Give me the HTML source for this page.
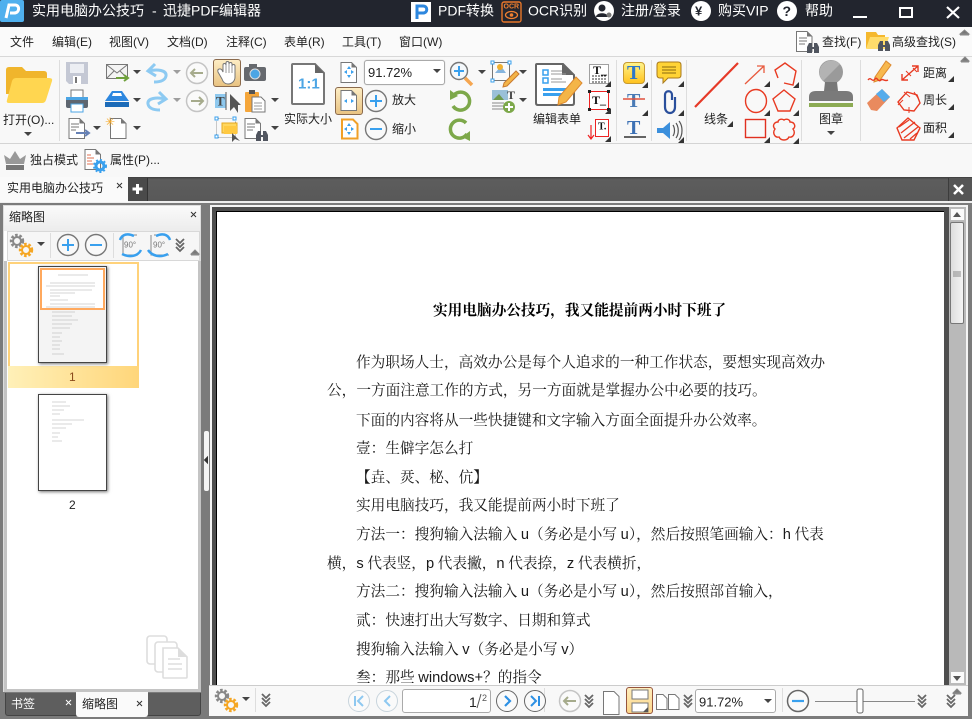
<!DOCTYPE html>
<html lang="zh"><head><meta charset="utf-8"><title>实用电脑办公技巧 - 迅捷PDF编辑器</title>
<style>
html,body{margin:0;padding:0;background:#7b7b7b}
body{position:relative;width:972px;height:719px;overflow:hidden}
div{position:absolute;box-sizing:border-box}
svg{position:absolute;left:0;top:0}
text{font-family:"Liberation Sans","Noto Sans CJK SC",sans-serif;font-size:12px;fill:#222;dominant-baseline:central}
.w{fill:#fff}.t{font-size:14px;fill:#fff}
.d{font-family:"Liberation Serif","Noto Serif CJK SC",serif;font-size:14.66px;fill:#1a1a1a}
.s{font-family:"Liberation Sans",sans-serif}
</style></head><body>
<div style="left:0;top:0;width:972px;height:27px;background:#22252e"></div>
<div style="left:0;top:27px;width:972px;height:30px;background:#fafafa;border-bottom:1px solid #d8d8d8"></div>
<div style="left:0;top:57px;width:972px;height:87px;background:#f8f8f8;border-bottom:1px solid #d4d4d4"></div>
<div style="left:0;top:144px;width:972px;height:33px;background:#f8f8f8"></div>
<div style="left:0;top:177px;width:972px;height:25px;background:linear-gradient(#3d3d3d,#5d5d5d 10%,#585858)"></div>
<div style="left:0;top:201px;width:972px;height:2px;background:#eee"></div>
<div style="left:0;top:177px;width:128px;height:25px;background:#fafafa"></div>
<div style="left:128px;top:178px;width:20px;height:23px;background:#4a4a4a;border-right:1px solid #333"></div>
<div style="left:948px;top:178px;width:24px;height:23px;background:#555;border-left:1px solid #3c3c3c"></div>
<!-- left panel -->
<div style="left:3px;top:205px;width:198px;height:487px;background:#fff;border:1px solid #ddd"></div>
<div style="left:4px;top:206px;width:196px;height:25px;background:linear-gradient(#fafafa,#ececec)"></div>
<div style="left:7px;top:231px;width:193px;height:30px;background:#f6f6f6;border:1px solid #d8d8d8"></div>
<div style="left:4px;top:261px;width:3px;height:431px;background:#c4c4c4"></div>
<div style="left:198px;top:261px;width:3px;height:431px;background:#c4c4c4"></div>
<div style="left:4px;top:689px;width:197px;height:3px;background:#c4c4c4"></div>
<div style="left:8px;top:262px;width:131px;height:126px;background:#fff;border:2px solid #ffd27a;border-bottom:0"></div>
<div style="left:8px;top:366px;width:131px;height:22px;background:linear-gradient(90deg,#fff0b8,#ffd67a)"></div>
<div style="left:38px;top:266px;width:69px;height:97px;background:#f4f4f4;border:1px solid #444;box-shadow:1px 1px 3px #777"></div>
<div style="left:40px;top:268px;width:65px;height:42px;background:#fff;border:2px solid #ffa95e"></div>
<div style="left:38px;top:394px;width:69px;height:97px;background:#fff;border:1px solid #444;box-shadow:1px 1px 3px #777"></div>
<div style="left:5px;top:693px;width:196px;height:23px;background:#5e5e5e;border:1px solid #444;border-top:0;border-radius:0 0 3px 3px"></div>
<div style="left:76px;top:692px;width:72px;height:25px;background:#fafafa;border-radius:0 0 3px 3px"></div>
<!-- splitter -->
<div style="left:204px;top:431px;width:5px;height:60px;background:#f4f4f4;border-radius:2px"></div>
<!-- main view -->
<div style="left:210px;top:205px;width:758px;height:511px;background:#f4f4f4"></div>
<div style="left:212px;top:207px;width:737px;height:478px;background:#4e4e4e"></div>
<div style="left:216px;top:211px;width:728px;height:474px;background:#fff;border:1px solid #000;border-width:1px 0 0 1px"></div>
<div style="left:949px;top:207px;width:17px;height:478px;background:#b9b9b9"></div>
<div style="left:950px;top:208px;width:15px;height:13px;background:#fafafa;border:1px solid #bbb"></div>
<div style="left:950px;top:222px;width:14px;height:102px;background:linear-gradient(90deg,#ddd,#f4f4f4);border:1px solid #777;border-radius:2px"></div>
<div style="left:950px;top:671px;width:15px;height:13px;background:#fafafa;border:1px solid #bbb"></div>
<div style="left:209px;top:685px;width:759px;height:31px;background:#f8f8f8;border-top:1px solid #ccc"></div>
<div style="left:402px;top:689px;width:89px;height:24px;background:#fff;border:1px solid #aaa;border-radius:3px"></div>
<div style="left:695px;top:689px;width:81px;height:24px;background:#fff;border:1px solid #aaa;border-radius:3px"></div>
<div style="left:626px;top:687px;width:27px;height:27px;background:linear-gradient(#ffeebd,#fbd488);border:1px solid #95543c;border-radius:3px"></div>
<div style="left:364px;top:60px;width:81px;height:25px;background:#fff;border:1px solid #aaa;border-radius:3px;box-shadow:0 0 1px #bbb"></div>
<div style="left:213px;top:59px;width:28px;height:28px;background:linear-gradient(#fdedc4,#e9c382);border:1px solid #8b6a4c;border-radius:3px"></div>
<div style="left:335px;top:87px;width:28px;height:28px;background:linear-gradient(#fdedc4,#e9c382);border:1px solid #8b6a4c;border-radius:3px"></div>
<div style="left:623px;top:62px;width:22px;height:22px;background:linear-gradient(#fff38a,#ffc21f);border:1px solid #c79a30;border-radius:4px"></div>

<svg width="972" height="719" viewBox="0 0 972 719" xmlns="http://www.w3.org/2000/svg">
<defs>
<path id="ar" d="M-4 -2H4L0 2Z" fill="#444"/>
<path id="tri" d="M3 -3V3H-3Z" fill="#333"/>
<g id="ch" fill="none" stroke="#666" stroke-width="1.800"><path d="M-4 -6L0 -2L4 -6M-4 -2L0 2L4 -2M-4 2L0 6L4 2"/></g>
<g id="doc"><path d="M0.500 .5H11L16 5.500V20.500H.5Z" fill="#fff" stroke="#777"/><path d="M11 .5V5.500H16Z" fill="#777"/></g>
<g id="gear"><circle cx="8" cy="8" r="5.500" fill="none" stroke="#888" stroke-width="3.400" stroke-dasharray="2.400 1.600"/><circle cx="8" cy="8" r="4" fill="none" stroke="#888" stroke-width="2"/><circle cx="17" cy="17" r="5.500" fill="none" stroke="#f5a623" stroke-width="3.400" stroke-dasharray="2.400 1.600"/><circle cx="17" cy="17" r="4" fill="none" stroke="#f5a623" stroke-width="2"/></g>
<g id="bino"><path d="M0 4L2 0H5V4H7V0H10L12 4V10H7V6H5V10H0Z" fill="#50555f"/></g>
</defs>

<!-- title bar -->
<rect x="0" y="0" width="24" height="22" rx="2" fill="#4fb0ee"/>
<path d="M6 18L9 5H15C20 5 20 13 14 13H10" fill="none" stroke="#fff" stroke-width="3"/>
<text class="t" x="32" y="10.500">实用电脑办公技巧</text>
<text class="t" x="152" y="10.500">-</text>
<text class="t" x="163" y="10.500">迅捷PDF编辑器</text>
<rect x="411" y="2" width="20" height="20" fill="#fff"/>
<path d="M417 19V6H423C428 6 428 13 423 13H417" fill="none" stroke="#2d87df" stroke-width="3"/>
<text class="t" x="438" y="10.500">PDF转换</text>
<rect x="502" y="2" width="19" height="20" rx="2" fill="#22252e" stroke="#e8772a" stroke-width="1.400"/>
<text x="503.500" y="7" style="font-size:7px;fill:#f08030;font-weight:bold">OCR</text>
<ellipse cx="511.500" cy="15" rx="6" ry="3.500" fill="none" stroke="#f08030" stroke-width="1.300"/><circle cx="511.500" cy="15" r="1.800" fill="#f08030"/>
<text class="t" x="528" y="10.500">OCR识别</text>
<circle cx="604" cy="11" r="10" fill="#fff"/><circle cx="602" cy="8" r="3.500" fill="#23262f"/><path d="M596 17C596 12 608 12 608 17Z" fill="#23262f"/><circle cx="609" cy="15" r="2.500" fill="#777"/>
<text class="t" x="621" y="10.500">注册/登录</text>
<circle cx="701" cy="11" r="10" fill="#fff"/><text x="695" y="11" style="font-size:13px;font-weight:bold;fill:#22252e">¥</text>
<text class="t" x="718" y="10.500">购买VIP</text>
<circle cx="787" cy="11" r="10" fill="#fff"/><text x="782.500" y="11" style="font-size:14px;font-weight:bold;fill:#22252e">?</text>
<text class="t" x="805" y="10.500">帮助</text>
<rect x="853" y="16" width="14" height="2" fill="#fff"/>
<rect x="900" y="8" width="12" height="9" fill="none" stroke="#fff" stroke-width="2"/>
<path d="M947 7L959 18M959 7L947 18" stroke="#fff" stroke-width="2.200"/>

<!-- menu -->
<text x="10" y="42">文件</text><text x="52" y="42">编辑(E)</text><text x="109" y="42">视图(V)</text><text x="167" y="42">文档(D)</text><text x="226" y="42">注释(C)</text><text x="284" y="42">表单(R)</text><text x="342" y="42">工具(T)</text><text x="399" y="42">窗口(W)</text>
<g transform="translate(796,31)"><use href="#doc"/><path d="M3 7H11M3 10H11M3 13H9" stroke="#777"/><use href="#bino" x="11" y="12"/></g>
<text x="822" y="42">查找(F)</text>
<path d="M866 32H876L878 35H885V48H866Z" fill="#f5b82e"/><path d="M866 49L870 37H889L885 49Z" fill="#ffdc6b"/><use href="#bino" x="878" y="41"/>
<text x="892" y="42">高级查找(S)</text>
<path d="M960 34H969L964.500 30ZM960 35H969" fill="#777" stroke="#888"/>

<!-- ribbon group 1 -->
<path d="M6 94V70Q6 67 9 67H22L26 71H44Q47 71 47 74V94Z" fill="#f0b52c"/>
<path d="M9 103Q6 103 7 100L12 81Q13 78 16 78H49Q53 78 52 81L46 100Q45 103 42 103Z" fill="#ffd650"/>
<text x="3" y="120">打开(O)...</text>
<use href="#ar" x="28" y="134"/>
<path d="M59.500 60V141M616.500 60V141M651.500 60V141M686.500 60V141M801.500 60V141M860.500 60V141" stroke="#ddd"/>
<!-- save -->
<path d="M66 62H88V84H69L66 81Z" fill="#c4c8d4"/><rect x="70" y="64" width="14" height="9" fill="#eceef3"/><rect x="73" y="76" width="8" height="8" fill="#fff"/><rect x="75" y="77" width="2" height="6" fill="#777"/>
<!-- print -->
<rect x="71" y="90" width="12" height="8" fill="#fff" stroke="#777"/><rect x="66" y="97" width="22" height="11" rx="2" fill="#5e6670"/><rect x="66" y="97" width="22" height="3" fill="#4ca5e4"/><rect x="71" y="104" width="12" height="8" fill="#fff" stroke="#4ca5e4"/>
<!-- export doc -->
<use href="#doc" x="68.500" y="118"/><path d="M71 124H79M71 127H79M71 130H76" stroke="#777"/><path d="M76 133H88M85 130L89 133L85 136" stroke="#6681b5" stroke-width="2" fill="none"/>
<use href="#ar" x="97" y="128"/>
<!-- mail -->
<rect x="106.500" y="64.500" width="21" height="14" fill="#f4f4f4" stroke="#777"/><path d="M107 65L117 73L127 65M107 78L114 71M127 78L120 71" fill="none" stroke="#777"/><path d="M116 78H127M124 75L128 78L124 81" stroke="#6fa13c" stroke-width="2" fill="none"/>
<use href="#ar" x="137" y="72"/>
<!-- scan -->
<path d="M105 101L112 91H122L129 101Z" fill="#2d87df"/><path d="M113 93H121L122 96H112Z" fill="#fff"/><rect x="105" y="102" width="24" height="5" fill="#1c6bb8"/>
<use href="#ar" x="137" y="100"/>
<!-- new -->
<use href="#doc" x="110" y="118"/><text x="105" y="122" style="font-size:12px;fill:#f5a623">✳</text>
<use href="#ar" x="137" y="128"/>
<!-- undo redo -->
<path d="M155 64L148 71L156 76M149 71C157 69 167 70 166 76C165 81 159 82 154 82" fill="none" stroke="#8dcaf2" stroke-width="3"/>
<path d="M159 92L166 99L158 104M165 99C157 97 147 98 148 104C149 109 155 110 160 110" fill="none" stroke="#8dcaf2" stroke-width="3"/>
<use href="#ar" x="177" y="72" opacity=".5"/><use href="#ar" x="177" y="100" opacity=".5"/>
<circle cx="197" cy="73" r="10.500" fill="#fafafa" stroke="#c4c4c4" stroke-width="1.500"/><path d="M203 73H191M195 69L191 73L195 77" fill="none" stroke="#a6ab8c" stroke-width="2"/>
<circle cx="197" cy="101" r="10.500" fill="#fafafa" stroke="#c4c4c4" stroke-width="1.500"/><path d="M191 101H203M199 97L203 101L199 105" fill="none" stroke="#a6ab8c" stroke-width="2"/>
<!-- hand -->
<path d="M222 79L218 72C217 69 220 68 222 70L223 72V65C223 63 226 63 226 65V63C226 61 229 61 229 63V64C229 62 232 62 232 64V66C232 64 235 64 235 66V77C235 81 232 84 228 84C225 84 223 82 222 79Z" fill="#fff" stroke="#777"/><path d="M226 65V73M229 64V73M232 66V73" stroke="#999"/>
<!-- camera -->
<rect x="244" y="67" width="22" height="14" rx="2" fill="#66696e"/><rect x="249" y="64" width="8" height="3" fill="#66696e"/><circle cx="255" cy="74" r="5" fill="#4ca5e4" stroke="#ddd"/>
<!-- text select -->
<rect x="215" y="94" width="11" height="14" fill="#8ec8ee"/><text x="216" y="101" style="font-size:13px;font-weight:bold;fill:#444;font-family:'Liberation Serif',serif">T</text><path d="M226 92V110" stroke="#555"/><path d="M230 94V111L234 107L238 113V105H241Z" fill="#555"/>
<!-- clipboard -->
<rect x="245" y="92" width="14" height="20" rx="1" fill="#f5a63a"/><rect x="249" y="90" width="6" height="4" fill="#555"/><path d="M252 97H261L265 101V112H252Z" fill="#fff" stroke="#777"/><path d="M254 103H262M254 106H262M254 109H262" stroke="#999"/>
<use href="#ar" x="275" y="100"/>
<!-- comment select -->
<rect x="216.500" y="118.500" width="19" height="19" fill="none" stroke="#999" stroke-dasharray="1 1"/><rect x="222" y="123" width="15" height="10" fill="#ffd65e" stroke="#e6a820"/><rect x="224" y="126" width="13" height="8" fill="#ffc941"/><rect x="215" y="117" width="3" height="3" fill="#fff" stroke="#39a0ee"/><rect x="233" y="117" width="3" height="3" fill="#fff" stroke="#39a0ee"/><rect x="215" y="135" width="3" height="3" fill="#fff" stroke="#39a0ee"/><path d="M232 133V142L235 139L240 141Z" fill="#555"/>
<!-- doc bino -->
<use href="#doc" x="244.500" y="118"/><path d="M247 124H255M247 127H255M247 130H253" stroke="#777"/><use href="#bino" x="256" y="131"/>
<use href="#ar" x="275" y="128"/>
<!-- 1:1 -->
<path d="M292 65Q292 64 293 64H315L324 73V103Q324 104 323 104H293Q292 104 292 103Z" fill="#fff" stroke="#777" stroke-width="2"/><path d="M315 64V73H324Z" fill="#666"/>
<text x="298" y="84" style="font-size:15px;fill:#4ca5e4;font-weight:bold">1:1</text>
<text x="284" y="119">实际大小</text>
<!-- fit -->
<use href="#doc" x="340.500" y="62"/><use href="#doc" x="340.500" y="90"/>
<path d="M342 119.500H353L357.500 124V138.500H342Z" fill="#fff" stroke="#f0a028" stroke-width="2"/>
<g fill="#39a0ee"><path d="M349 66L351 69H347ZM349 78L351 75H347ZM344 72L347 70V74ZM354 72L351 70V74ZM344 101L347 99V103ZM354 101L351 99V103ZM349 123L351 126H347ZM349 135L351 132H347ZM344 129L347 127V131ZM354 129L351 127V131Z"/></g>
<!-- zoom controls -->
<text x="368" y="72.500" style="font-size:13px">91.72%</text><use href="#ar" x="437" y="71"/>
<circle cx="376" cy="101" r="10.500" fill="#f9f9f9" stroke="#777" stroke-width="1.400"/><path d="M370 101H382M376 95V107" stroke="#39a0ee" stroke-width="2"/>
<circle cx="376" cy="129" r="10.500" fill="#f9f9f9" stroke="#777" stroke-width="1.400"/><path d="M370 129H382" stroke="#39a0ee" stroke-width="2"/>
<text x="392" y="100">放大</text><text x="392" y="129">缩小</text>
<circle cx="459" cy="71" r="8.500" fill="#f4f8fb" stroke="#777" stroke-width="1.400"/><path d="M454 71H464M459 66V76" stroke="#39a0ee" stroke-width="2"/><path d="M465 78L472 85" stroke="#f5a650" stroke-width="3.500"/>
<use href="#ar" x="482" y="72"/>
<path d="M454 95A9 9 0 1 1 453 106" fill="none" stroke="#7da84a" stroke-width="3.500"/><path d="M450 90L458 96L450 100Z" fill="#7da84a"/>
<path d="M466 123A9 9 0 1 0 467 134" fill="none" stroke="#7da84a" stroke-width="3.500"/><path d="M470 118L462 124L470 128Z" fill="#7da84a" transform="translate(0,13)"/>
<!-- edit image -->
<rect x="492.500" y="62.500" width="17" height="18" fill="#fafafa" stroke="#777"/><path d="M495 73L501 66L506 73Z" fill="#86b5de"/><circle cx="500" cy="67" r="3" fill="#f0b030"/>
<rect x="491" y="61" width="3" height="3" fill="#fff" stroke="#39a0ee"/><rect x="508" y="61" width="3" height="3" fill="#fff" stroke="#39a0ee"/><rect x="491" y="79" width="3" height="3" fill="#fff" stroke="#39a0ee"/>
<path d="M504 83L516 71L519 74L507 86L503 87Z" fill="#f4b548" stroke="#c97a30"/>
<use href="#ar" x="523" y="72"/>
<rect x="492" y="90" width="16" height="10" fill="#9ac0d8"/><path d="M493 100L499 94L504 100Z" fill="#6e9a4e"/><text x="507" y="95" style="font-size:12px;font-weight:bold;fill:#444;font-family:'Liberation Serif',serif">T</text><path d="M492 103H504M492 106H504M492 109H504" stroke="#888"/><circle cx="509" cy="107" r="6" fill="#7da84a"/><path d="M505 107H513M509 103V111" stroke="#fff" stroke-width="2"/>
<use href="#ar" x="523" y="100"/>
<!-- edit form -->
<path d="M536 65Q536 64 537 64H563L574 75V103Q574 105 572 105H538Q536 105 536 103Z" fill="#fff" stroke="#666" stroke-width="2"/><path d="M562 64V75H574Z" fill="#666"/>
<rect x="543" y="70" width="5" height="5" fill="none" stroke="#39a0ee" stroke-width="1.500"/><rect x="543" y="78" width="5" height="5" fill="none" stroke="#39a0ee" stroke-width="1.500"/><path d="M551 71H562M551 74H566M551 79H562M551 82H566" stroke="#999"/><rect x="543" y="88" width="24" height="3" fill="#39a0ee"/><rect x="543" y="93" width="24" height="3" fill="#39a0ee"/>
<path d="M559 97L576 77L582 83L566 102L558 105Z" fill="#f4b548" stroke="#dd8a30"/>
<text x="533" y="119">编辑表单</text>
<!-- textboxes -->
<rect x="589.500" y="64.500" width="19" height="19" fill="#fff" stroke="#444" stroke-dasharray="1 1"/><text x="593" y="70" style="font-size:12px;font-weight:bold;fill:#111;font-family:'Liberation Serif',serif">T_</text><path d="M592 76H606M592 79H606M592 82H606" stroke="#333" stroke-dasharray="2 1"/>
<rect x="589.500" y="91.500" width="19" height="18" fill="#fff" stroke="#e22"/><text x="592" y="100" style="font-size:12px;font-weight:bold;fill:#111;font-family:'Liberation Serif',serif">T_</text>
<rect x="588" y="90" width="3" height="3" fill="#222"/><rect x="607" y="90" width="3" height="3" fill="#222"/><rect x="588" y="108" width="3" height="3" fill="#222"/><rect x="607" y="108" width="3" height="3" fill="#222"/>
<rect x="595.500" y="119.500" width="13" height="17" fill="#fff" stroke="#e22"/><text x="598" y="127" style="font-size:10px;font-weight:bold;fill:#111;font-family:'Liberation Serif',serif">T.</text><path d="M591 125V139M588 135L591 139L594 135" fill="none" stroke="#e22" stroke-width="1.200"/>
<use href="#tri" x="608" y="84"/><use href="#tri" x="608" y="111"/><use href="#tri" x="608" y="139"/>
<text x="627" y="73" style="font-size:20px;font-weight:bold;fill:#2d77c8;font-family:'Liberation Serif',serif">T</text>
<text x="627" y="101" style="font-size:20px;font-weight:bold;fill:#4a7bb6;font-family:'Liberation Serif',serif">T</text><path d="M623 99H645" stroke="#e0503c" stroke-width="1.500"/>
<text x="627" y="128" style="font-size:20px;font-weight:bold;fill:#3c70b4;font-family:'Liberation Serif',serif">T</text><path d="M624 137H646" stroke="#333" stroke-width="1.500"/>
<use href="#tri" x="645" y="85"/><use href="#tri" x="645" y="113"/>
<!-- note/clip/sound -->
<path d="M660 62H678Q681 62 681 65V75Q681 78 678 78H668L663 83V78H660Q657 78 657 75V65Q657 62 660 62Z" fill="#ffd335" stroke="#a8791c"/><path d="M662 67H676M662 70H676M662 73H676" stroke="#8a6a10"/>
<path d="M672 100V95C672 90 665 90 665 95V107C665 115 675 115 675 107V97" fill="none" stroke="#2a4f9c" stroke-width="2.200"/>
<path d="M657 128H663L670 122V139L663 133H657Z" fill="#3b8fdc"/><path d="M673 125C675 128 675 133 673 136M676 123C679 127 679 134 676 138M679 121C683 126 683 135 679 140" fill="none" stroke="#555" stroke-width="1.200"/>
<use href="#tri" x="681" y="84"/><use href="#tri" x="681" y="113"/><use href="#tri" x="681" y="140"/>
<!-- lines/shapes -->
<path d="M695 107L738 63" stroke="#e63a28" stroke-width="2.200"/>
<text x="704" y="119">线条</text><use href="#tri" x="730" y="124"/>
<path d="M745 84L764 66M757 66H764V73" fill="none" stroke="#e85a3e" stroke-width="1.300"/>
<path d="M778 78L775 70L785 63L796 71L793 85L784 83" fill="none" stroke="#e83a22" stroke-width="1.400"/><use href="#tri" x="767" y="84"/><use href="#tri" x="796" y="85"/>
<ellipse cx="756" cy="101" rx="10.500" ry="11.500" fill="none" stroke="#e83a22" stroke-width="1.400"/>
<path d="M784 90L795 99L790 111H778L773 99Z" fill="none" stroke="#e83a22" stroke-width="1.400"/><use href="#tri" x="767" y="113"/><use href="#tri" x="796" y="113"/>
<rect x="745.500" y="119.500" width="20" height="18" fill="none" stroke="#e03020" stroke-width="1.400"/>
<path d="M784 120C787 118 790 120 790 122C795 122 796 127 793 129C796 133 793 138 789 137C787 141 781 141 779 137C775 138 772 133 775 129C772 126 774 122 778 122C778 120 781 118 784 120Z" fill="none" stroke="#e83a22" stroke-width="1.400"/><use href="#tri" x="767" y="140"/><use href="#tri" x="796" y="141"/>
<!-- stamp -->
<circle cx="831" cy="72" r="12" fill="#9a9a9a"/><path d="M823 81L840 64A12 12 0 0 0 823 81" fill="#b3b3b3"/><path d="M825 82H837L838 91H824Z" fill="#777"/><path d="M809 101V97Q809 91 816 91H846Q853 91 853 97V101Z" fill="#7a7a7a"/><rect x="809" y="103" width="44" height="4" fill="#8cab53"/>
<text x="819" y="119">图章</text><use href="#ar" x="831" y="133"/>
<!-- right tools -->
<path d="M875 77L886 61L891 65L880 80L874 82Z" fill="#f7b84e" stroke="#dd8a30"/>
<path d="M868 80C871 76 872 83 875 79C877 76 878 83 881 80C883 78 884 82 888 80" fill="none" stroke="#e83a22" stroke-width="1.400"/>
<path d="M867 103L882 89L890 97L877 111L871 110Z" fill="#e98a5e"/><path d="M876 94L882 89L890 97L884 102Z" fill="#55acec"/>
<path d="M902 80L918 66M902 74V80H908M912 66H918V72" fill="none" stroke="#e83a22" stroke-width="1.400"/><path d="M906 71L911 76M913 68L917 72" stroke="#e83a22"/>
<text x="923" y="73">距离</text><use href="#tri" x="951" y="79"/>
<path d="M907 92L917 95L920 103L914 111L904 110L898 102Z" fill="none" stroke="#e83a22" stroke-width="1.400"/><path d="M904 92L910 97M914 92L918 98M898 105L903 100M909 113L909 107" stroke="#e83a22"/>
<text x="923" y="100">周长</text><use href="#tri" x="951" y="107"/>
<path d="M908 118L920 128L914 140H902L897 128Z" fill="none" stroke="#e83a22" stroke-width="1.400"/><path d="M899 127L909 120M901 133L915 122M904 138L918 127M910 139L917 133" stroke="#e83a22" stroke-width="1.300"/>
<text x="923" y="128">面积</text><use href="#tri" x="951" y="135"/>
<path d="M961 61H969L965 57ZM961 62H969" fill="#777" stroke="#888"/>

<!-- second row -->
<path d="M4 155L10 159L15 151L20 159L26 155L24 164H6Z" fill="#999"/><rect x="6" y="165" width="18" height="5" fill="#777"/>
<text x="30" y="160">独占模式</text>
<use href="#doc" x="84.500" y="149"/><path d="M87 155H91M87 158H94M87 161H92M87 164H96" stroke="#e07050"/>
<circle cx="100" cy="166" r="4" fill="none" stroke="#39a0ee" stroke-width="3"/><circle cx="100" cy="166" r="6" fill="none" stroke="#39a0ee" stroke-width="2" stroke-dasharray="2 2"/>
<text x="110" y="160">属性(P)...</text>

<!-- tabs -->
<text x="7" y="188">实用电脑办公技巧</text>
<path d="M117 183L122 188M122 183L117 188" stroke="#333"/>
<path d="M137.500 184V194M132.500 189H142.500" stroke="#fff" stroke-width="3"/>
<path d="M954 185L963 194M963 185L954 194" stroke="#fff" stroke-width="2.500"/>
<!-- panel -->
<text x="9" y="217">缩略图</text>
<path d="M191 212L196 217M196 212L191 217" stroke="#333"/>
<use href="#gear" x="9" y="233"/><use href="#ar" x="41" y="244"/>
<path d="M50.500 233V258M113.500 233V258" stroke="#ddd"/>
<circle cx="68" cy="245" r="10.500" fill="#f9f9f9" stroke="#777" stroke-width="1.400"/><path d="M62 245H74M68 239V251" stroke="#39a0ee" stroke-width="2"/>
<circle cx="96" cy="245" r="10.500" fill="#f9f9f9" stroke="#777" stroke-width="1.400"/><path d="M90 245H102" stroke="#39a0ee" stroke-width="2"/>
<path d="M123 235H137M123 235V255H138" fill="none" stroke="#888"/><text x="124" y="245" style="font-size:8px;fill:#777">90°</text><path d="M120 240C122 234 128 233 134 236M122 254C130 258 138 256 141 250" fill="none" stroke="#39a0ee" stroke-width="2.500"/>
<path d="M154 235H166M169 255H151V235" fill="none" stroke="#888"/><text x="153" y="245" style="font-size:8px;fill:#777">90°</text><path d="M170 240C168 234 162 233 156 236M168 254C160 258 152 256 148 250" fill="none" stroke="#39a0ee" stroke-width="2.500"/>
<use href="#ch" x="180" y="245"/>
<path d="M191 254H199L195 250ZM191 255H199" fill="#777" stroke="#888"/>
<!-- mini thumbs text -->
<g stroke="#aaa" stroke-width=".6">
<path d="M58 275H88M50 283H95M46 286H95M50 290H92M50 293H75M50 296H60M50 300H68M50 304H95M46 307H95M52 312H75M52 316H72M52 320H78M52 324H72M52 328H70M52 333H62M52 337H60M52 341H62M52 345H60M52 349H60M52 354H64"/>
<path d="M52 402H66M52 406H70M52 410H64M52 414H60M52 420H84M52 424H72M52 428H66M52 433H60M52 437H58M52 441H62"/>
</g>
<text x="69" y="377" style="font-size:12px;fill:#8a4a1a">1</text>
<text x="69" y="505">2</text>
<g fill="#fff" stroke="#ddd" stroke-width="1.600"><rect x="147" y="636" width="20" height="28" rx="3"/><rect x="155" y="642" width="22" height="30" rx="3"/><path d="M163 648H178L187 657V677Q187 678 186 678H164Q163 678 163 677Z"/></g><path d="M168 659H180M168 664H182M168 669H182" stroke="#ddd" stroke-width="1.600"/><path d="M178 648L187 657H178Z" fill="#ddd"/>
<text x="11" y="704" class="w">书签</text><path d="M66 700L71 705M71 700L66 705" stroke="#fff"/>
<text x="82" y="704">缩略图</text><path d="M137 701L142 706M142 701L137 706" stroke="#333"/>
<path d="M207.500 457V463L204.500 460Z" fill="#333" stroke="#333"/>

<!-- doc -->
<text class="d" x="433" y="311" style="font-weight:bold;fill:#000">实用电脑办公技巧，我又能提前两小时下班了</text>
<text class="d" x="356" y="363">作为职场人士，高效办公是每个人追求的一种工作状态，要想实现高效办</text>
<text class="d" x="327" y="391">公，一方面注意工作的方式，另一方面就是掌握办公中必要的技巧。</text>
<text class="d" x="356" y="421">下面的内容将从一些快捷键和文字输入方面全面提升办公效率。</text>
<text class="d" x="356" y="449">壹：生僻字怎么打</text>
<text class="d" x="356" y="478">【垚、烎、柲、伉】</text>
<text class="d" x="356" y="506">实用电脑技巧，我又能提前两小时下班了</text>
<text class="d" x="356" y="535">方法一：搜狗输入法输入 <tspan class="s">u</tspan>（务必是小写 <tspan class="s">u</tspan>），然后按照笔画输入：<tspan class="s">h</tspan> 代表</text>
<text class="d" x="327" y="564">横，<tspan class="s">s</tspan> 代表竖，<tspan class="s">p</tspan> 代表撇，<tspan class="s">n</tspan> 代表捺，<tspan class="s">z</tspan> 代表横折，</text>
<text class="d" x="356" y="592">方法二：搜狗输入法输入 <tspan class="s">u</tspan>（务必是小写 <tspan class="s">u</tspan>），然后按照部首输入，</text>
<text class="d" x="356" y="621">贰：快速打出大写数字、日期和算式</text>
<text class="d" x="356" y="650">搜狗输入法输入 <tspan class="s">v</tspan>（务必是小写 <tspan class="s">v</tspan>）</text>
<text class="d" x="356" y="678">叁：那些 <tspan class="s">windows+</tspan>？的指令</text>

<!-- scrollbar marks -->
<path d="M953 217H961L957 212Z" fill="#555"/><path d="M953 676H961L957 681Z" fill="#555"/>
<path d="M953 272H961M953 274H961M953 276H961" stroke="#888"/>

<!-- bottom -->
<use href="#gear" x="214" y="688"/><use href="#ar" x="246" y="699"/><path d="M255.500 688V712M544.500 688V712M782.500 688V712" stroke="#ddd"/><use href="#ch" x="266" y="700"/>
<g fill="#fafafa"><circle cx="359" cy="701" r="10.500" stroke="#c8d4dc"/><circle cx="387" cy="701" r="10.500" stroke="#c8d4dc"/><circle cx="507" cy="701" r="10.500" stroke="#666"/><circle cx="535" cy="701" r="10.500" stroke="#666"/><circle cx="570" cy="701" r="10.500" stroke="#c4c4c4" stroke-width="1.500"/></g>
<path d="M355 696V706M363 696L358 701L363 706" fill="none" stroke="#8ec8f0" stroke-width="2"/>
<path d="M390 696L385 701L390 706" fill="none" stroke="#8ec8f0" stroke-width="2"/>
<path d="M505 696L510 701L505 706" fill="none" stroke="#2d90e4" stroke-width="2.200"/>
<path d="M531 696L536 701L531 706M539 696V706" fill="none" stroke="#2d90e4" stroke-width="2"/>
<path d="M576 701H564M568 697L564 701L568 705" fill="none" stroke="#a6ab8c" stroke-width="2"/>
<text x="469" y="702" style="font-size:14px">1</text><path d="M477 708L481 694" stroke="#555"/><text x="482" y="698" style="font-size:9px;fill:#555">2</text>
<use href="#ch" x="589" y="701"/><use href="#ch" x="688" y="701"/>
<path d="M603.500 691.500H614L619 696.500V714.500H603.500Z" fill="#fff" stroke="#777"/>
<rect x="632" y="690" width="16" height="9" fill="#fff" stroke="#777"/><rect x="632" y="703" width="16" height="9" fill="#fff" stroke="#777"/>
<path d="M643 712L648 707V712Z" fill="#555"/>
<path d="M656.500 694.500H663L667 698.500V709.500H656.500ZM668.500 694.500H675L679 698.500V709.500H668.500Z" fill="#fff" stroke="#777"/>
<text x="699" y="702" style="font-size:13px">91.72%</text><use href="#ar" x="768" y="701"/>
<circle cx="798" cy="701" r="10.500" fill="#f9f9f9" stroke="#666" stroke-width="1.500"/><path d="M792 701H804" stroke="#39a0ee" stroke-width="2.200"/>
<path d="M815 701.500H915" stroke="#888"/><rect x="857" y="689" width="6" height="24" rx="2" fill="#fff" stroke="#666"/>
<use href="#ch" x="922" y="701"/><use href="#ch" x="951" y="701"/>
<path d="M953 693H961L957 689ZM953 694H961" fill="#777" stroke="#888"/>
</svg>
</body></html>
